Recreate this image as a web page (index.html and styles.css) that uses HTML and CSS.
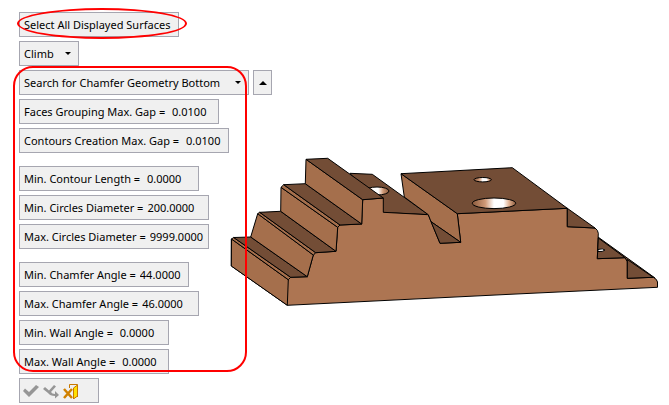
FILE: index.html
```html
<!DOCTYPE html>
<html lang="en">
<head>
<meta charset="utf-8">
<title>Chamfer geometry parameters</title>
<link rel="stylesheet" href="styles.css">
</head>
<body>
<main class="workspace">
  <form class="panel">
    <div class="marked oval">
      <button type="button" class="box w160">Select All Displayed Surfaces</button>
    </div>
    <div class="picker w60">
      <select class="box" aria-label="Cutting direction"><option>Climb</option></select>
    </div>
    <div class="marked rounded">
      <div class="row">
        <div class="picker w230">
          <select class="box" aria-label="Geometry search"><option>Search for Chamfer Geometry Bottom</option></select>
        </div>
        <button type="button" class="box collapse" aria-label="Collapse"></button>
      </div>
      <label class="box w200">Faces Grouping Max. Gap =<input type="text" value="&nbsp;0.0100"></label>
      <label class="box w210">Contours Creation Max. Gap =<input type="text" value="&nbsp;0.0100"></label>
      <label class="box w180 group">Min. Contour Length =<input type="text" value="&nbsp;0.0000"></label>
      <label class="box w190">Min. Circles Diameter =<input type="text" value="200.0000"></label>
      <label class="box w190">Max. Circles Diameter =<input type="text" value="9999.0000"></label>
      <label class="box w170 group">Min. Chamfer Angle =<input type="text" value="44.0000"></label>
      <label class="box w180">Max. Chamfer Angle =<input type="text" value="46.0000"></label>
      <label class="box w150">Min. Wall Angle =<input type="text" value="&nbsp;0.0000"></label>
      <label class="box w150">Max. Wall Angle =<input type="text" value="&nbsp;0.0000"></label>
    </div>
    <div class="box actions">
      <button type="button" aria-label="OK"><svg viewBox="0 0 16 16"><path d="M0 8 2 5.500 6 9 13 2 16 4 6 14Z" fill="#969696"/></svg></button>
      <button type="button" aria-label="Apply"><svg viewBox="0 0 16 16"><path d="M0 6 2 4 6 7.500 11 2 13 3.500 8 9Q9 11 12 11V8L16 12 12 15.500V13Q7 13 5 10Z" fill="#969696"/></svg></button>
      <button type="button" aria-label="Exit"><svg viewBox="0 0 16 16"><path d="M6.500 5V1.500H14.500V14" fill="none" stroke="#c87800"/><path d="M10.500 5 14.500 2V13L10.500 16Z" fill="#ffe000" stroke="#c87800"/><path d="M1 6 9 15M9 6 1 15" fill="none" stroke="#d08000" stroke-width="2.500"/></svg></button>
    </div>
  </form>
  <figure class="model">
    <svg viewBox="230 156 429 152" role="img" aria-label="Machined part with stepped sides">
      <defs>
        <linearGradient id="bore">
          <stop offset="0" stop-color="#8b5a3c"/><stop offset=".3" stop-color="#d09a78"/>
          <stop offset=".5" stop-color="#fff"/><stop offset=".72" stop-color="#fff"/>
          <stop offset=".85" stop-color="#e0b090"/><stop offset="1" stop-color="#8b5a3c"/>
        </linearGradient>
        <linearGradient id="bore-left">
          <stop offset=".15" stop-color="#e0b090"/><stop offset=".35" stop-color="#fff"/>
          <stop offset=".55" stop-color="#fff"/><stop offset=".75" stop-color="#d09a78"/>
          <stop offset="1" stop-color="#8b5a3c"/>
        </linearGradient>
      </defs>
      <g class="solid">
        <path class="dark" d="M350 173.300 372.300 174.300 428.300 214.700 383 212.500Z"/>
        <ellipse cx="377" cy="191" rx="12" ry="4" fill="url(#bore-left)"/>
        <path class="dark" d="M598 237 655 278 627 279 597 259Z"/>
        <path class="front" d="M231.300 266V239L288.300 279.700 290.700 277.300 307.300 276.700 313.300 255 315.700 252.700 336 251.300 337.700 227.300 340 225 361.700 224 362.700 199.700 383.300 198V212.300L428.300 214.700 440 243.300 460.700 242.300 457.300 213.700 567.300 208.300V226.700L595 228Q598 230 598.300 233.300L597.300 258.700 625 257.700 627.300 261.700V278.300L653.300 277.300Q657 279 657.500 282V287.300L510 294.300 287.300 305.300Z"/>
        <path class="side" d="M231.300 266 231.500 239 288.300 279.700 287.300 305.300Z"/>
        <path class="side" d="M231.500 239 233.700 237.500 290.700 277.300 288.300 279.700Z"/>
        <path class="dark" d="M233.700 237.500 250.700 237 307.300 276.700 290.700 277.300Z"/>
        <path class="side" d="M250.700 237 257.700 213.700 313.300 255 307.300 276.700Z"/>
        <path class="side" d="M257.700 213.700 259.700 212.300 315.700 252.700 313.300 255Z"/>
        <path class="dark" d="M259.700 212.300 280.700 211.300 336 251.300 315.700 252.700Z"/>
        <path class="side" d="M280.700 211.300 281 187.300 337.700 227.300 336 251.300Z"/>
        <path class="side" d="M281 187.300 283.700 184.700 340 225 337.700 227.300Z"/>
        <path class="dark" d="M283.700 184.700 305.300 183.700 361.700 224 340 225Z"/>
        <path class="side" d="M305.300 183.700 306 159.300 362.700 199.700 361.700 224Z"/>
        <path class="dark" d="M306 159.300 327.700 158.300 383.300 198 362.700 199.700Z"/>
        <path class="side" d="M401 173.700 457.300 213.700 460.700 242.300 431 221.700 428.300 214.700 404.300 197Z"/>
        <path class="dark" d="M431 221.700 460.700 242.300 440 243.300Z"/>
        <path class="dark" d="M401 173.700 512.300 167.700 567.300 208.300 457.300 213.700Z"/>
        <ellipse cx="482.700" cy="179.700" rx="8.700" ry="2.200" fill="url(#bore)"/>
        <ellipse cx="494" cy="203.300" rx="21.700" ry="5.300" fill="url(#bore)"/>
        <path class="dark" d="M567.300 208.300 595 228 567.300 226.700Z"/>
        <path class="dark" d="M598.300 238 625 257.700 597.300 258.700Z"/>
        <path d="M598 249.500Q603 248 605 250 603 252 598 251.500Z" fill="#fff"/>
        <path class="dark" d="M627.300 259.500 653.300 277.300 627.300 278.300Z"/>
      </g>
    </svg>
  </figure>
</main>
</body>
</html>
```

FILE: styles.css
```css
* { box-sizing: border-box; }

body {
  margin: 0;
  background: #fff;
  color: #000;
  font: 11px/16px "Noto Sans", "Open Sans", sans-serif;
}

.workspace {
  display: flex;
  align-items: flex-start;
  padding: 12px 10px 0 19px;
}

.panel {
  position: relative;
  z-index: 1;
  display: flex;
  flex: none;
  flex-direction: column;
  align-items: flex-start;
  gap: 4px;
}

.row { display: flex; gap: 4px; }

.box {
  display: flex;
  align-items: center;
  gap: 4px;
  height: 25px;
  margin: 0;
  padding: 0 0 0 4px;
  border: 1px solid #a6a6b0;
  border-radius: 0;
  background: #f0f0f0;
  color: #000;
  font: inherit;
  white-space: nowrap;
}

.box input {
  flex: 1;
  width: 0;
  min-width: 0;
  padding: 0;
  border: 0;
  outline: 0;
  background: none;
  color: inherit;
  font: inherit;
}

.group { margin-top: 9px; }

.w60 { width: 60px; }
.w150 { width: 150px; }
.w160 { width: 160px; }
.w170 { width: 170px; }
.w180 { width: 180px; }
.w190 { width: 190px; }
.w200 { width: 200px; }
.w210 { width: 210px; }
.w230 { width: 230px; }

.picker { position: relative; }
.picker select { width: 100%; appearance: none; }

.picker::after {
  content: "";
  position: absolute;
  top: 11px;
  right: 8px;
  border: 3px solid transparent;
  border-top-color: #000;
  border-bottom: 0;
  pointer-events: none;
}

.collapse { justify-content: center; width: 19px; padding: 0; }

.collapse::before {
  content: "";
  flex: none;
  border: 4px solid transparent;
  border-bottom-color: #000;
  border-top: 0;
}

/* Red call-outs drawn over the controls */
.marked {
  position: relative;
  display: flex;
  flex-direction: column;
  align-items: flex-start;
  gap: 4px;
}

.marked::after {
  content: "";
  position: absolute;
  border: 2px solid #f00;
  pointer-events: none;
}

.oval::after { inset: -4px -8px -2px -2px; border-radius: 50%; }
.rounded::after { inset: -4px 25px 2px -6px; border-radius: 20px; }

.actions { gap: 4px; width: 80px; padding: 0 3px; }

.actions button {
  width: 16px;
  height: 16px;
  padding: 0;
  border: 0;
  background: none;
}

.actions svg { display: block; }

.model {
  flex: 1;
  min-width: 0;
  margin: 144px 0 0 -42px;
}

.model svg { display: block; width: 100%; }

.solid { stroke: #000; stroke-linejoin: round; }
.front { fill: #ad7552; }
.side { fill: #a56f4c; }
.dark { fill: #734d36; }
```
